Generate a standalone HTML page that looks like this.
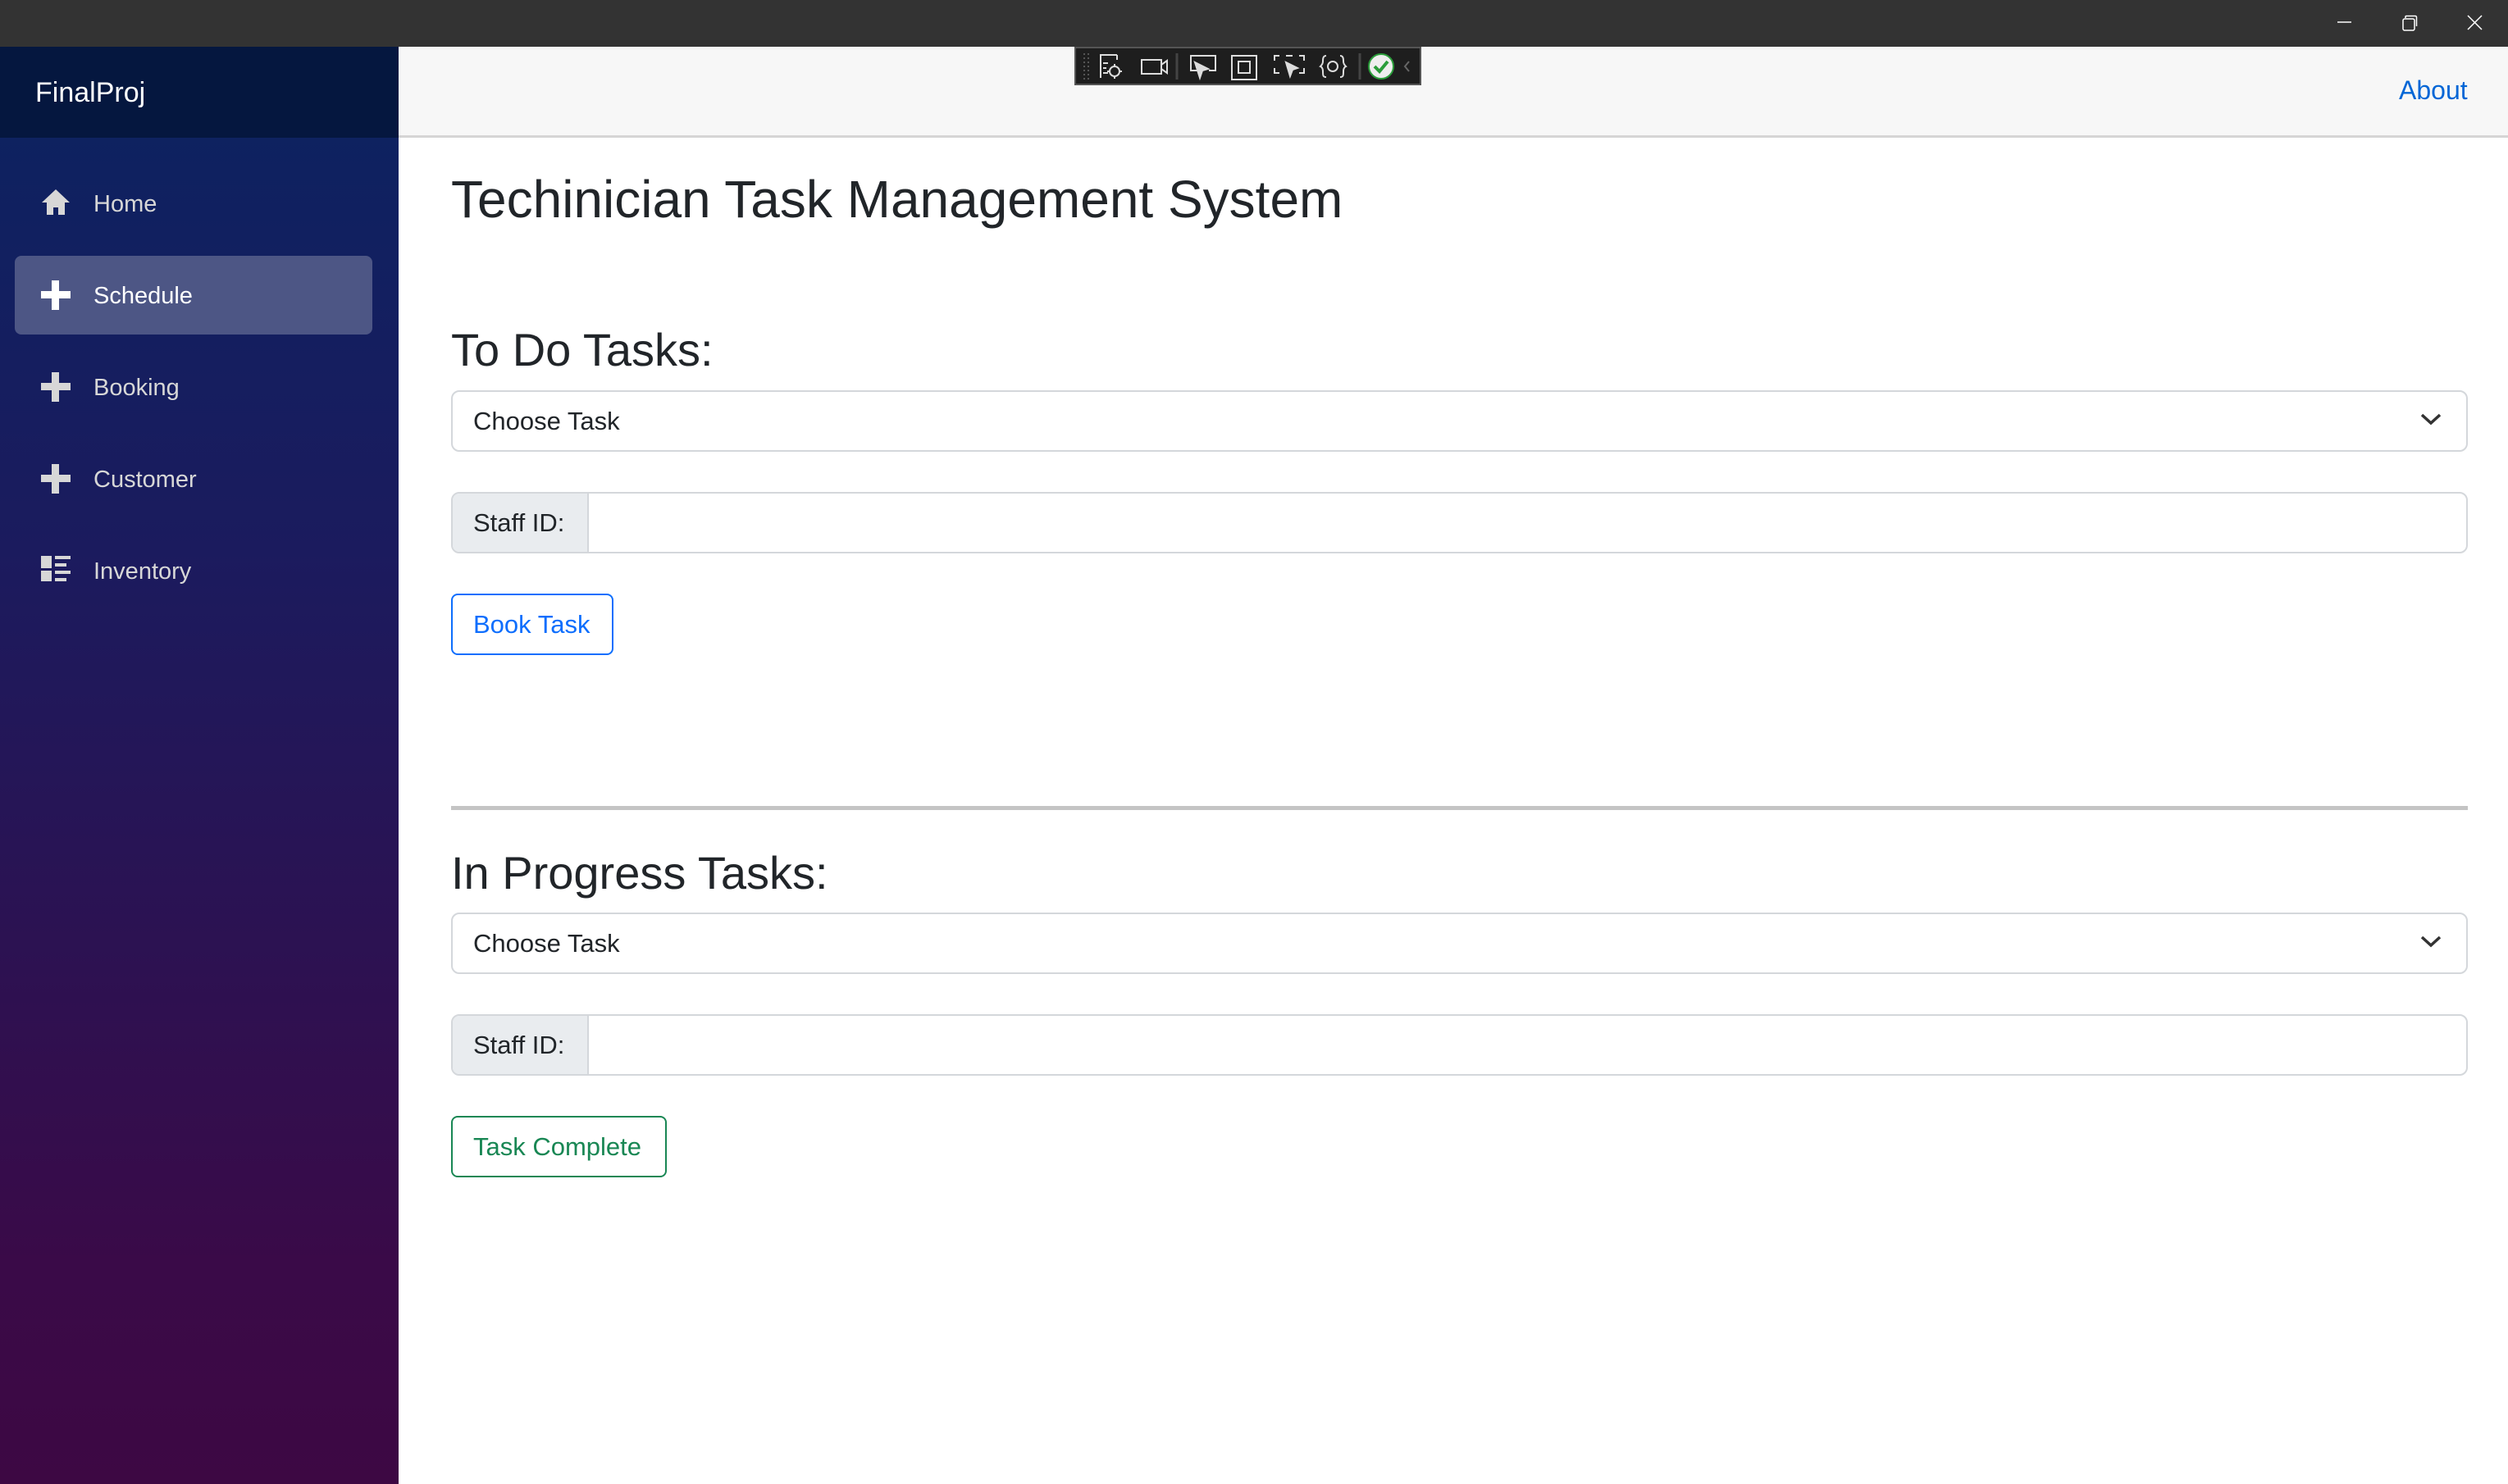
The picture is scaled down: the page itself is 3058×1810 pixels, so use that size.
<!DOCTYPE html>
<html><head><meta charset="utf-8"><style>
*{box-sizing:border-box;margin:0;padding:0}
body{width:3058px;height:1810px;overflow:hidden;font-family:"Liberation Sans",Arial,sans-serif;background:#fff;position:relative;color:#212529}
.abs{position:absolute}
#tb{left:0;top:0;width:3058px;height:57px;background:#333}
#side{left:0;top:57px;width:486px;height:1753px;background:linear-gradient(180deg,#0b2361 0%,#1b1b5e 35%,#3a0a48 85%,#3d0843 100%)}
#brand{left:0;top:57px;width:486px;height:111px;background:#05173f;color:#fff;font-size:34px;padding-left:43px;line-height:113px}
.nav{left:18px;width:436px;height:96px;border-radius:8px;color:#d7d7d7;font-size:29px;line-height:98px;padding-left:96px}
.nav.sel{background:#4d5685;color:#fff}
.nav svg{position:absolute;left:32px;top:30px}
#top{left:486px;top:57px;width:2572px;height:111px;background:#f7f7f7;border-bottom:3px solid #d6d5d5}
#about{left:2925px;top:92px;color:#0366d6;font-size:32px}
h1{position:absolute;left:550px;top:206px;font-weight:normal;font-size:64px}
h2{position:absolute;font-weight:normal;font-size:56px;left:550px}
.sel2{left:550px;width:2459px;height:75px;border:2px solid #d4d7db;border-radius:10px;font-size:31px;line-height:71px;padding-left:25px}
.sel2 svg{position:absolute;right:30px;top:25px}
.ig{left:550px;width:2459px;height:75px;border:2px solid #d4d7db;border-radius:10px;overflow:hidden}
.ig div{position:absolute;left:0;top:0;width:166px;height:100%;background:#e9ecef;border-right:2px solid #d4d7db;font-size:31px;line-height:71px;padding-left:25px}
.btn{left:550px;height:75px;border:2px solid;border-radius:8px;font-size:31px;line-height:71px;padding-left:25px}
#hr{left:550px;top:983px;width:2459px;height:5px;background:#c4c4c4}
#tool{left:1310px;top:57px;width:423px;height:47px;background:#1e1e1e;border:2px solid #555}
</style></head><body>
<div id="tb" class="abs">
<svg class="abs" style="left:2850px;top:18px" width="200" height="22"><line x1="0" y1="9" x2="17" y2="9" stroke="#fff" stroke-width="1.5"/><rect x="80" y="5" width="14" height="14" rx="2" fill="none" stroke="#fff" stroke-width="1.5"/><path d="M83 4v-1.5a1 1 0 0 1 1-1h11a1.5 1.5 0 0 1 1.5 1.5v11" fill="none" stroke="#fff" stroke-width="1.5"/><path d="M159 1l17 17M176 1l-17 17" stroke="#fff" stroke-width="1.5"/></svg>
</div>
<div id="side" class="abs"></div>
<div id="brand" class="abs">FinalProj</div>
<div class="abs nav" style="top:200px"><svg width="36" height="32" viewBox="0 0 36 32"><path d="M18 1L1 17h6v15h8v-9h6v9h8V17h6z" fill="#d7d7d7"/></svg>Home</div>
<div class="abs nav sel" style="top:312px"><svg width="36" height="36"><path d="M13 0h9v13h14v9H22v14h-9V22H0v-9h13z" fill="#fff"/></svg>Schedule</div>
<div class="abs nav" style="top:424px"><svg width="36" height="36"><path d="M13 0h9v13h14v9H22v14h-9V22H0v-9h13z" fill="#d7d7d7"/></svg>Booking</div>
<div class="abs nav" style="top:536px"><svg width="36" height="36"><path d="M13 0h9v13h14v9H22v14h-9V22H0v-9h13z" fill="#d7d7d7"/></svg>Customer</div>
<div class="abs nav" style="top:648px"><svg width="36" height="32"><path d="M0 0h13v15H0zM0 18h13v13H0zM17 0h19v4H17zM17 9h14v4H17zM17 18h19v4H17zM17 27h14v4H17z" fill="#d7d7d7"/></svg>Inventory</div>
<div id="top" class="abs"></div>
<div id="tool" class="abs">
<svg width="419" height="43" viewBox="0 0 419 43" fill="none" stroke="#ddd" stroke-width="2">
<g stroke="#555" stroke-dasharray="2 3"><line x1="10" y1="6" x2="10" y2="38"/><line x1="15" y1="6" x2="15" y2="38"/></g>
<path d="M30 36V8h20M30 8h20M50 8v6"/><path d="M33 18h6M33 24h4M33 30h6"/><circle cx="47" cy="28" r="6"/><path d="M47 19v4M47 33v4M38 28h4M52 28h4"/>
<rect x="80" y="14" width="24" height="17"/><path d="M104 20l7-5v15l-7-5"/>
<line x1="123" y1="6" x2="123" y2="38" stroke="#444" stroke-width="3"/>
<path d="M150 27h-10V9h30v18h-8"/><path d="M145 17l16 8-7 2-3 9z" fill="#ddd"/>
<rect x="190" y="9" width="30" height="29"/><rect x="198" y="16" width="14" height="14"/>
<path d="M242 15V9h6M272 9h6v6M278 24v6h-6M242 24v6h6M256 9h8"/><path d="M256 17l14 7-6 2-3 8z" fill="#ddd"/>
<path d="M305 9c-4 0-4 4-4 7s-3 6-3 6 3 1 3 6 0 7 4 7M322 9c4 0 4 4 4 7s3 6 3 6-3 1-3 6 0 7-4 7"/><circle cx="313" cy="22" r="6"/>
<line x1="346" y1="6" x2="346" y2="38" stroke="#444" stroke-width="3"/>
<circle cx="372" cy="22" r="15" fill="#eee" stroke="#2a9d3a" stroke-width="2"/><path d="M364 22l6 6 10-12" stroke="#2a9d3a" stroke-width="4"/>
<path d="M406 16l-5 6 5 6" stroke="#666"/></svg>
</div>
<div id="about" class="abs">About</div>
<h1>Techinician Task Management System</h1>
<h2 style="top:394px">To Do Tasks:</h2>
<div class="abs sel2" style="top:476px">Choose Task<svg width="26" height="16"><path d="M2 3l11 10 11-10" fill="none" stroke="#333" stroke-width="3.5"/></svg></div>
<div class="abs ig" style="top:600px"><div>Staff ID:</div></div>
<div class="abs btn" style="top:724px;width:198px;color:#0d6efd;border-color:#0d6efd">Book Task</div>
<div id="hr" class="abs"></div>
<h2 style="top:1032px">In Progress Tasks:</h2>
<div class="abs sel2" style="top:1113px">Choose Task<svg width="26" height="16"><path d="M2 3l11 10 11-10" fill="none" stroke="#333" stroke-width="3.5"/></svg></div>
<div class="abs ig" style="top:1237px"><div>Staff ID:</div></div>
<div class="abs btn" style="top:1361px;width:263px;color:#198754;border-color:#198754">Task Complete</div>
</body></html>
